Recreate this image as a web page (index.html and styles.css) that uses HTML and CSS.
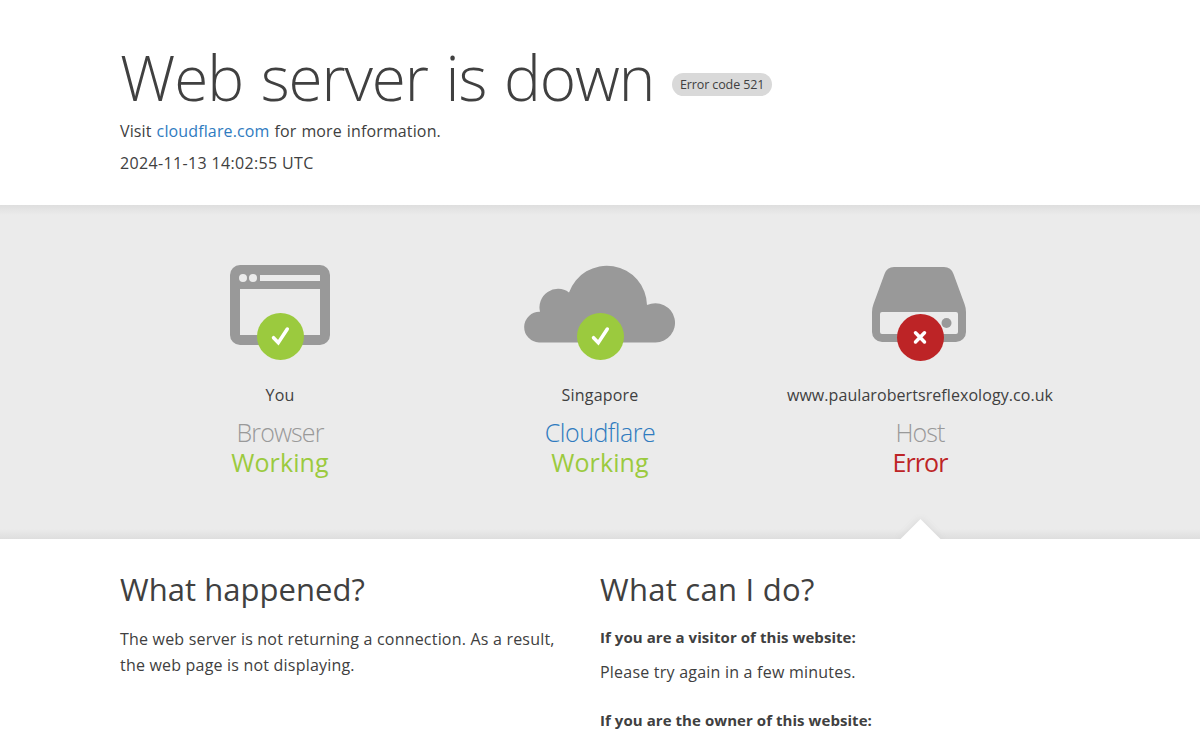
FILE: index.html
```html
<!DOCTYPE html>
<html lang="en-US">

<head>
    <title>Web server is down</title>
    <meta charset="utf-8">
    <meta name="viewport" content="width=device-width, initial-scale=1">
    <link rel="stylesheet" href="styles.css">
</head>

<body>
    <div id="cf-error-details">
        <header class="wrap page-header">
            <h1>
                <span class="title">Web server is down</span>
                <span class="code-label">Error code 521</span>
            </h1>
            <div class="more">Visit <a href="https://www.cloudflare.com/">cloudflare.com</a> for more information.</div>
            <div class="timestamp">2024-11-13 14:02:55 UTC</div>
        </header>

        <div class="status-band">
            <div class="wrap status-row">
                <div class="status-item" id="browser-status">
                    <div class="status-icon">
                        <svg class="device" width="160" height="95" viewBox="0 0 160 95">
                            <path fill="#999" fill-rule="evenodd" d="M40 0h80a10 10 0 0 1 10 10v60a10 10 0 0 1-10 10H40a10 10 0 0 1-10-10V10A10 10 0 0 1 40 0zM40 24v46h80V24zM60 10v6h60v-6zM43 9a4 4 0 1 0 0 8a4 4 0 1 0 0-8zM53 9a4 4 0 1 0 0 8a4 4 0 1 0 0-8z"/>
                        </svg>
                        <svg class="badge" width="48" height="48" viewBox="0 0 48 48">
                            <circle cx="24.5" cy="24.5" r="23.5" fill="#9bca3e"/>
                            <path d="M17.5 25.7l4.8 5.1 9-13.8" fill="none" stroke="#fff" stroke-width="3.5" stroke-linecap="round"/>
                        </svg>
                    </div>
                    <span class="location">You</span>
                    <h3 class="name">Browser</h3>
                    <span class="state ok">Working</span>
                </div>
                <div class="status-item" id="cloudflare-status">
                    <div class="status-icon">
                        <svg class="device" width="160" height="95" viewBox="0 0 160 95">
                            <path fill="#999" d="M19 77.4a15.3 15.3 0 0 1 1-30.6A18.5 18.5 0 0 1 49 27.5A40.15 40.15 0 0 1 127 40.1A19.6 19.6 0 1 1 135.5 77.4z"/>
                        </svg>
                        <svg class="badge" width="48" height="48" viewBox="0 0 48 48">
                            <circle cx="24.5" cy="24.5" r="23.5" fill="#9bca3e"/>
                            <path d="M17.5 25.7l4.8 5.1 9-13.8" fill="none" stroke="#fff" stroke-width="3.5" stroke-linecap="round"/>
                        </svg>
                    </div>
                    <span class="location">Singapore</span>
                    <h3 class="name cloud-name"><a href="https://www.cloudflare.com/">Cloudflare</a></h3>
                    <span class="state ok">Working</span>
                </div>
                <div class="status-item error-source" id="host-status">
                    <div class="status-icon">
                        <svg class="device" width="160" height="95" viewBox="0 0 160 95">
                            <path fill="#999" fill-rule="evenodd" d="M54 2h50q7 0 9.5 7l11 30q1.500 4 1.500 8v20a10 10 0 0 1-10 10H42a10 10 0 0 1-10-10V47q0-4 1.500-8l11-30q2.500-7 9.500-7zM42 47q-2 0-2 2v18q0 2 2 2h74q2 0 2-2V49q0-2-2-2z"/>
                            <circle cx="106.500" cy="58" r="5" fill="#999"/>
                        </svg>
                        <svg class="badge" width="48" height="49" viewBox="0 0 48 49">
                            <circle cx="24.5" cy="25.5" r="23.5" fill="#bd2426"/>
                            <path d="M19.5 20.8l9 9.2m0-9.2l-9 9.2" fill="none" stroke="#fff" stroke-width="3.5" stroke-linecap="round"/>
                        </svg>
                    </div>
                    <span class="location host">www.paularobertsreflexology.co.uk</span>
                    <h3 class="name">Host</h3>
                    <span class="state bad">Error</span>
                </div>
            </div>
        </div>

        <div class="wrap columns">
            <div class="column">
                <h2 class="happened">What happened?</h2>
                <p class="result">The web server is not returning a connection. As a result, the web page is not displaying.</p>
            </div>
            <div class="column">
                <h2>What can I do?</h2>
                <h4>If you are a visitor of this website:</h4>
                <p class="retry">Please try again in a few minutes.</p>
                <h4>If you are the owner of this website:</h4>
            </div>
        </div>
    </div>
</body>

</html>
```
FILE: styles.css
```css
html,
body {
    height: 100%;
}
body {
    margin: 0;
    overflow: hidden;
    background: #fff;
    color: #404040;
    font-family: "Open Sans", "Noto Sans", sans-serif;
    font-size: 16px;
    line-height: 24px;
    letter-spacing: 0.2px;
}
h1,
h2,
h3,
h4,
p {
    margin: 0;
}
a {
    color: #2f7bbf;
    text-decoration: none;
}
.wrap {
    width: 960px;
    margin: 0 auto;
}
.page-header {
    height: 171px;
    padding-top: 34px;
}
h1 {
    display: flex;
    align-items: center;
    height: 85px;
    font-weight: 300;
}
.title {
    position: relative;
    top: 1px;
    font-size: 62px;
    line-height: 85px;
    letter-spacing: -1.12px;
    word-spacing: 2.8px;
}
.code-label {
    width: 100px;
    margin: 16px 0 0 18px;
    border-radius: 12px;
    background: #d9d9d9;
    font-size: 12.5px;
    font-weight: 400;
    line-height: 23px;
    letter-spacing: -0.1px;
    text-align: center;
}
.more {
    letter-spacing: 0.13px;
    word-spacing: 0.7px;
}
.timestamp {
    margin-top: 8px;
    letter-spacing: 0.35px;
}
.status-band {
    height: 334px;
    background: linear-gradient(to bottom, #dedede, #ebebeb 3%, #ebebeb 97%, #dedede);
}
.status-row {
    display: flex;
    height: 334px;
}
.status-item {
    position: relative;
    width: 320px;
    box-sizing: border-box;
    padding-top: 60px;
    text-align: center;
}
.status-icon {
    position: relative;
    height: 95px;
    margin-bottom: 23px;
}
.badge {
    position: absolute;
    top: 47px;
    left: 136px;
}
.location {
    display: block;
}
.host {
    letter-spacing: 0.07px;
}
.name {
    margin-top: 10px;
    color: #999;
    font-size: 25px;
    font-weight: 300;
    line-height: 30px;
    letter-spacing: -0.9px;
}
.cloud-name {
    letter-spacing: -0.5px;
}
.state {
    display: block;
    font-size: 25px;
    line-height: 30px;
    letter-spacing: 0.1px;
}
.ok {
    color: #9bca3e;
}
.bad {
    color: #bd2426;
    letter-spacing: -0.9px;
}
.error-source {
    overflow: hidden;
}
.error-source::after {
    content: "";
    position: absolute;
    bottom: -15px;
    left: 145.5px;
    width: 29px;
    height: 29px;
    background: #fff;
    box-shadow: 0 0 7px #d4d4d4;
    transform: rotate(45deg);
}
.columns {
    display: flex;
    gap: 40px;
    padding-top: 27px;
}
.column {
    width: 440px;
}
h2 {
    margin-bottom: 13px;
    font-size: 31px;
    font-weight: 400;
    line-height: 46px;
    letter-spacing: 0.27px;
}
.happened {
    margin-bottom: 14px;
    letter-spacing: 0.05px;
}
h4 {
    font-size: 15px;
    line-height: 24px;
    letter-spacing: 0.06px;
}
.result {
    line-height: 26px;
}
.retry {
    margin: 11px 0 24px;
    letter-spacing: 0.22px;
}
```
